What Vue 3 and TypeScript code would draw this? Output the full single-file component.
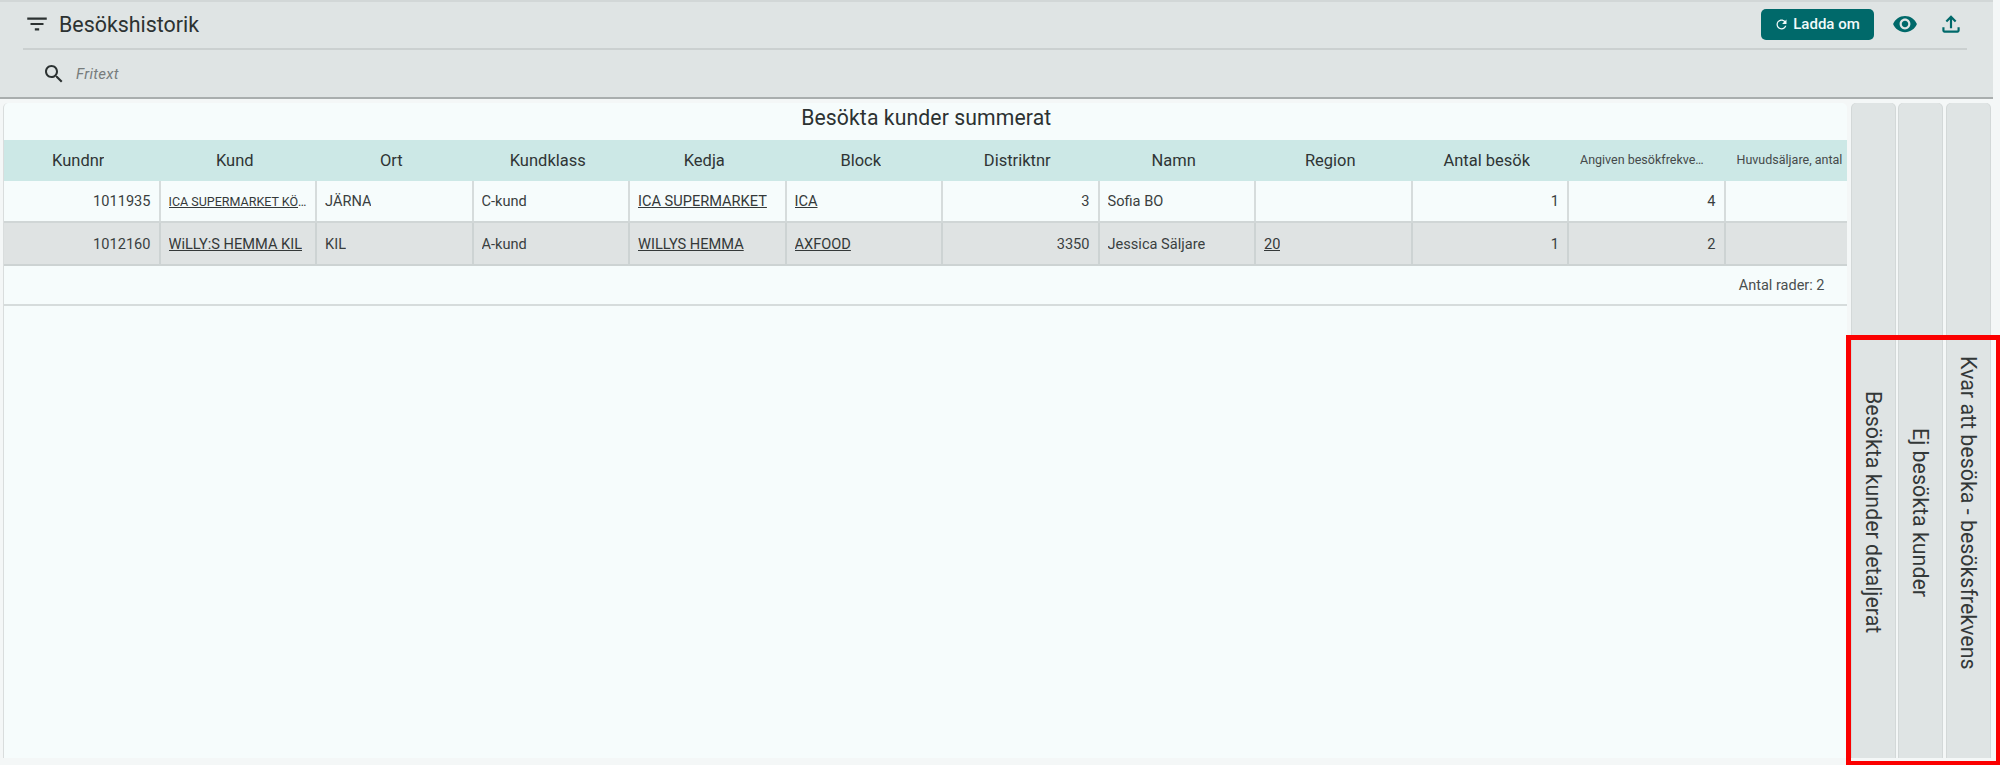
<script setup lang="ts">
interface Cell { text: string; kind?: 'num' | 'link' | 'linkSmall' }
const headers: { label: string; small?: boolean; last?: boolean }[] = [
  { label: 'Kundnr' }, { label: 'Kund' }, { label: 'Ort' }, { label: 'Kundklass' },
  { label: 'Kedja' }, { label: 'Block' }, { label: 'Distriktnr' }, { label: 'Namn' },
  { label: 'Region' }, { label: 'Antal besök' },
  { label: 'Angiven besökfrekvens', small: true },
  { label: 'Huvudsäljare, antal', small: true, last: true },
]
const rows: Cell[][] = [
  [
    { text: '1011935', kind: 'num' }, { text: 'ICA SUPERMARKET KÖPING', kind: 'linkSmall' },
    { text: 'JÄRNA' }, { text: 'C-kund' }, { text: 'ICA SUPERMARKET', kind: 'link' },
    { text: 'ICA', kind: 'link' }, { text: '3', kind: 'num' }, { text: 'Sofia BO' }, { text: '' },
    { text: '1', kind: 'num' }, { text: '4', kind: 'num' }, { text: '' },
  ],
  [
    { text: '1012160', kind: 'num' }, { text: 'WiLLY:S HEMMA KIL', kind: 'link' },
    { text: 'KIL' }, { text: 'A-kund' }, { text: 'WILLYS HEMMA', kind: 'link' },
    { text: 'AXFOOD', kind: 'link' }, { text: '3350', kind: 'num' }, { text: 'Jessica Säljare' },
    { text: '20', kind: 'link' }, { text: '1', kind: 'num' }, { text: '2', kind: 'num' }, { text: '' },
  ],
]
const tabs = ['Besökta kunder detaljerat', 'Ej besökta kunder', 'Kvar att besöka - besöksfrekvens']
</script>

<template>
  <div class="page">
    <header class="topbar">
      <div class="title-row">
        <svg class="filter" viewBox="0 0 24 24"><path d="M10 18h4v-2h-4v2zM3 6v2h18V6H3zm3 7h12v-2H6v2z" /></svg>
        <h1 class="title">Besökshistorik</h1>
        <button class="reload">
          <svg viewBox="0 0 24 24"><path d="M17.65 6.35C16.2 4.9 14.21 4 12 4c-4.42 0-7.99 3.58-7.99 8s3.57 8 7.99 8c3.73 0 6.84-2.55 7.73-6h-2.08c-.82 2.33-3.04 4-5.65 4-3.31 0-6-2.69-6-6s2.69-6 6-6c1.66 0 3.14.69 4.22 1.78L13 11h7V4l-2.35 2.35z" /></svg>
          Ladda om
        </button>
        <svg class="tool eye" viewBox="0 0 24 24"><path d="M12 4.5C7 4.5 2.73 7.61 1 12c1.73 4.39 6 7.5 11 7.5s9.27-3.11 11-7.5c-1.73-4.39-6-7.5-11-7.5zM12 17c-2.76 0-5-2.24-5-5s2.24-5 5-5 5 2.24 5 5-2.24 5-5 5zm0-8c-1.66 0-3 1.34-3 3s1.34 3 3 3 3-1.34 3-3-1.34-3-3-3z" /></svg>
        <svg class="tool upload" viewBox="0 0 24 24"><path d="M18 15v3H6v-3H4v3c0 1.1.9 2 2 2h12c1.1 0 2-.9 2-2v-3h-2zM7 9l1.41 1.41L11 7.83V16h2V7.83l2.59 2.58L17 9l-5-5-5 5z" /></svg>
      </div>
      <div class="search-row">
        <svg class="search" viewBox="0 0 24 24"><path d="M15.5 14h-.79l-.28-.27C15.41 12.59 16 11.11 16 9.5 16 5.91 13.09 3 9.5 3S3 5.91 3 9.5 5.91 16 9.5 16c1.61 0 3.09-.59 4.23-1.57l.27.28v.79l5 4.99L20.49 19l-4.99-5zm-6 0C7.01 14 5 11.99 5 9.5S7.01 5 9.5 5 14 7.01 14 9.5 11.99 14 9.5 14z" /></svg>
        <span class="placeholder">Fritext</span>
      </div>
    </header>

    <main class="content">
      <section class="panel">
        <h2 class="panel-title">Besökta kunder summerat</h2>
        <div class="grid head">
          <div v-for="h in headers" :key="h.label" class="hcell" :class="{ small: h.small, last: h.last }">
            <span class="clip">{{ h.label }}</span>
          </div>
        </div>
        <div v-for="(row, r) in rows" :key="r" class="grid row" :class="{ alt: r === 1 }">
          <div v-for="(c, i) in row" :key="i" class="cell" :class="c.kind">
            <span class="clip">{{ c.text }}</span>
          </div>
        </div>
        <div class="footer">Antal rader: 2</div>
      </section>
      <aside class="tabs">
        <div v-for="t in tabs" :key="t" class="tab"><span>{{ t }}</span></div>
      </aside>
    </main>

    <div class="highlight"></div>
  </div>
</template>

<style>
html, body { margin: 0; background: #f3f6f6; }
</style>

<style scoped>
* { box-sizing: border-box; }
.page {
  position: relative;
  width: 2000px;
  height: 765px;
  overflow: hidden;
  display: flex;
  flex-direction: column;
  font-family: Roboto, "Liberation Sans", sans-serif;
  color: #2c3232;
  background: #f4f7f7;
}
.topbar {
  width: 1992.5px;
  height: 99px;
  flex: none;
  background: #dfe4e4;
  border-top: 2px solid #d2d7d7;
  border-bottom: 2px solid #a9aeae;
}
.title-row {
  height: 48px;
  margin-left: 23px;
  margin-right: 26px;
  border-bottom: 2px solid #cbd0d0;
  display: flex;
  align-items: center;
  padding-bottom: 2px;
}
.filter { width: 26px; height: 26px; margin-left: 1px; fill: #2c3232; flex: none; }
.title { margin: 0 0 0 9px; font-size: 21.4px; font-weight: 400; flex: 1; }
.reload {
  width: 113px;
  height: 31px;
  border: 0;
  border-radius: 5px;
  background: #00696a;
  color: #f2fafa;
  font: 500 15px Roboto, sans-serif;
  display: flex;
  align-items: center;
  justify-content: center;
  gap: 4px;
  padding: 0;
  margin-right: 2px;
}
.reload svg { width: 15px; height: 15px; fill: #f2fafa; }
.tool { fill: #00696a; flex: none; }
.eye { width: 26px; height: 26px; margin-left: 16px; }
.upload { width: 26px; height: 26px; margin-left: 20px; margin-right: 3px; }
.search-row {
  height: 47px;
  display: flex;
  align-items: center;
  padding-left: 42px;
}
.search { width: 24px; height: 24px; fill: #2c3232; flex: none; }
.placeholder { margin-left: 10px; font-size: 15px; font-style: italic; color: #777c7c; letter-spacing: .3px; }
.content {
  flex: 1;
  display: flex;
  padding: 4px 3px 7px 3px;
  min-height: 0;
}
.panel {
  width: 1843.5px;
  flex: none;
  background: #f6fcfc;
  border-radius: 5px 5px 0 0;
  border-left: 1px solid #d9dddd;
  display: flex;
  flex-direction: column;
}
.panel-title {
  height: 37px;
  margin: 0;
  padding-left: 2px;
  font-size: 21.2px;
  font-weight: 400;
  text-align: center;
  line-height: 30px;
  letter-spacing: .1px;
}
.grid {
  display: grid;
  grid-template-columns: repeat(11, 156.5px) 121px;
}
.head { height: 41px; background: #cce8e6; }
.hcell {
  font-size: 16.5px;
  display: flex;
  align-items: center;
  justify-content: center;
  padding: 0 15px 1px 7px;
  min-width: 0;
  color: #2f3535;
}
.hcell.small { font-size: 12.5px; padding: 0 20px 2px 11px; justify-content: flex-start; color: #454a4a; }
.hcell.last { padding-right: 0; }
.row { height: 42px; font-size: 14.6px; border-bottom: 2px solid #d0d6d6; }
.row.alt { height: 43px; background: #dfe3e3; border-bottom-color: #cdd3d3; }
.cell {
  border-right: 2px solid #d6dcdc;
  padding: 0 8px;
  display: flex;
  align-items: center;
  min-width: 0;
  color: #3a3f3f;
}
.alt .cell { border-right-color: #cdd3d3; }
.cell:last-child { border-right: 0; }
.cell.num { justify-content: flex-end; }
.cell.link .clip, .cell.linkSmall .clip { text-decoration: underline; color: #343939; }
.cell.linkSmall { font-size: 12.5px; }
.clip { overflow: hidden; white-space: nowrap; text-overflow: ellipsis; }
.footer {
  height: 40px;
  border-bottom: 2px solid #d6dcdc;
  display: flex;
  align-items: center;
  justify-content: flex-end;
  padding-right: 22px;
  font-size: 14.5px;
  color: #4a4f4f;
}
.tabs {
  flex: 1;
  display: flex;
  gap: 4.7px;
  padding-left: 5px;
}
.tab {
  width: 43px;
  background: #dfe4e4;
  border-radius: 5px 5px 0 0;
  box-shadow: 1px 0 0 #d3d8d8, -1px 0 0 #d3d8d8;
  writing-mode: vertical-rl;
  display: flex;
  align-items: center;
  justify-content: center;
  padding-top: 164px;
  font-size: 21.4px;
  color: #333838;
}
.highlight {
  position: absolute;
  left: 1846px;
  top: 335px;
  width: 155px;
  height: 431px;
  border: 5px solid #fb0000;
  pointer-events: none;
}
</style>
